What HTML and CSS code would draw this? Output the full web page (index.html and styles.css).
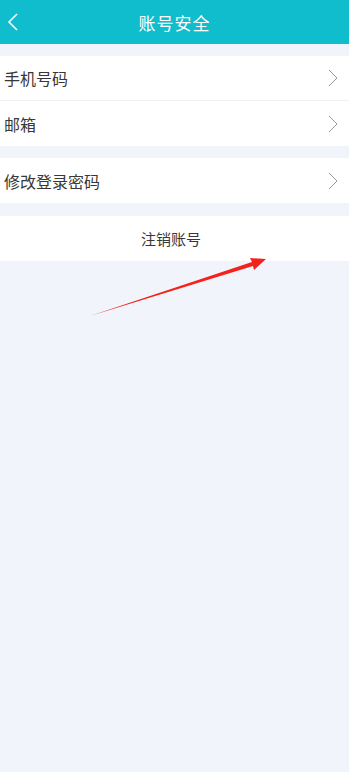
FILE: index.html
```html
<!DOCTYPE html>
<html lang="zh-CN">
<head>
    <meta charset="UTF-8">
    <meta name="viewport" content="width=device-width, initial-scale=1.0">
    <title>账号安全</title>
    <link rel="stylesheet" href="styles.css">
</head>
<body>
    <div class="page">
        <div class="header">
            <svg class="back" width="12" height="20" viewBox="0 0 12 20">
                <polyline points="10,2 2,10 10,18" fill="none" stroke="#fff" stroke-width="1.6"/>
            </svg>
            <h1>账号安全</h1>
        </div>

        <div class="group">
            <div class="row">
                <span class="row-label">手机号码</span>
                <svg class="arrow" width="10" height="18" viewBox="0 0 10 18">
                    <polyline points="1,1 9,9 1,17" fill="none" stroke="#999" stroke-width="1"/>
                </svg>
            </div>
            <div class="row">
                <span class="row-label">邮箱</span>
                <svg class="arrow" width="10" height="18" viewBox="0 0 10 18">
                    <polyline points="1,1 9,9 1,17" fill="none" stroke="#999" stroke-width="1"/>
                </svg>
            </div>
        </div>

        <div class="group">
            <div class="row">
                <span class="row-label">修改登录密码</span>
                <svg class="arrow" width="10" height="18" viewBox="0 0 10 18">
                    <polyline points="1,1 9,9 1,17" fill="none" stroke="#999" stroke-width="1"/>
                </svg>
            </div>
        </div>

        <div class="group group-last">
            <div class="row row-center">
                <span class="row-label">注销账号</span>
            </div>
        </div>

        <!-- red annotation arrow -->
        <svg class="mark" width="349" height="772" viewBox="0 0 349 772">
            <polygon points="90,316 252,262 250,258 266,259 254,270 253,266" fill="#f4211c"/>
        </svg>
    </div>
</body>
</html>
```

FILE: styles.css
```css
html, body {
    margin: 0;
    padding: 0;
}
body {
    font-family: "Noto Sans CJK SC", "Noto Sans", sans-serif;
    background-color: #f1f4fb;
    color: #333;
}
.page {
    position: relative;
    min-height: 772px;
}
.header {
    height: 44px;
    background-color: #0fbdcc;
    display: flex;
    align-items: center;
    justify-content: center;
    position: relative;
}
.header h1 {
    margin: 0;
    font-size: 17px;
    font-weight: normal;
    color: #fff;
    letter-spacing: 1px;
}
.back {
    position: absolute;
    left: 7px;
    top: 12px;
}
.group {
    margin-top: 12px;
    background-color: #fff;
}
.group-last {
    margin-top: 13px;
}
.row {
    box-sizing: border-box;
    height: 45px;
    display: flex;
    align-items: center;
    justify-content: space-between;
    padding: 0 11px 0 4px;
    border-bottom: 1px solid #eef0f3;
}
.row:last-child {
    border-bottom: none;
}
.row-label {
    font-size: 16px;
    color: #383838;
}
.row-center {
    justify-content: center;
}
.row-center .row-label {
    font-size: 15px;
}
.arrow {
    display: block;
}
.mark {
    position: absolute;
    left: 0;
    top: 0;
    pointer-events: none;
}
```
